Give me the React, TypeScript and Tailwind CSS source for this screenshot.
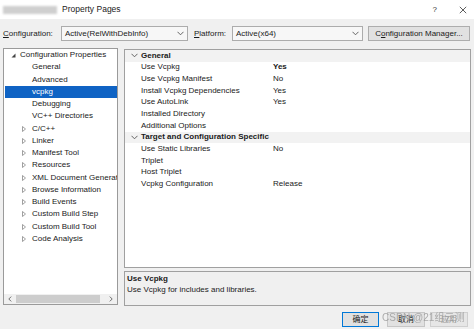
import React from "react";

const treeItems: { label: string; level: 0 | 1; expander?: "open" | "closed"; selected?: boolean }[] = [
  { label: "Configuration Properties", level: 0, expander: "open" },
  { label: "General", level: 1 },
  { label: "Advanced", level: 1 },
  { label: "vcpkg", level: 1, selected: true },
  { label: "Debugging", level: 1 },
  { label: "VC++ Directories", level: 1 },
  { label: "C/C++", level: 1, expander: "closed" },
  { label: "Linker", level: 1, expander: "closed" },
  { label: "Manifest Tool", level: 1, expander: "closed" },
  { label: "Resources", level: 1, expander: "closed" },
  { label: "XML Document Generator", level: 1, expander: "closed" },
  { label: "Browse Information", level: 1, expander: "closed" },
  { label: "Build Events", level: 1, expander: "closed" },
  { label: "Custom Build Step", level: 1, expander: "closed" },
  { label: "Custom Build Tool", level: 1, expander: "closed" },
  { label: "Code Analysis", level: 1, expander: "closed" },
];

type Row = { header?: boolean; name: string; value?: string; bold?: boolean };

const gridRows: Row[] = [
  { header: true, name: "General" },
  { name: "Use Vcpkg", value: "Yes", bold: true },
  { name: "Use Vcpkg Manifest", value: "No" },
  { name: "Install Vcpkg Dependencies", value: "Yes" },
  { name: "Use AutoLink", value: "Yes" },
  { name: "Installed Directory" },
  { name: "Additional Options" },
  { header: true, name: "Target and Configuration Specific" },
  { name: "Use Static Libraries", value: "No" },
  { name: "Triplet" },
  { name: "Host Triplet" },
  { name: "Vcpkg Configuration", value: "Release" },
];

function Chevron({ className = "" }: { className?: string }) {
  return (
    <svg width="7" height="5" viewBox="0 0 7 5" className={className}>
      <polyline points="0.5,0.8 3.5,3.8 6.5,0.8" fill="none" stroke="#555" strokeWidth="0.9" />
    </svg>
  );
}

function Expander({ kind }: { kind: "open" | "closed" }) {
  if (kind === "open") {
    return (
      <svg width="5" height="5" viewBox="0 0 5 5">
        <polygon points="4.5,0.5 4.5,4.5 0.5,4.5" fill="#444" />
      </svg>
    );
  }
  return (
    <svg width="4" height="6" viewBox="0 0 4 6">
      <polygon points="0.5,0.5 3.5,3 0.5,5.5" fill="none" stroke="#888" strokeWidth="0.8" />
    </svg>
  );
}

export default function App() {
  return (
    <div
      className="w-[474px] h-[329px] bg-[#f0f0f0] flex flex-col text-[8px] leading-none text-[#1a1a1a] overflow-hidden relative"
      style={{ fontFamily: '"Liberation Sans", "Noto Sans CJK SC", sans-serif' }}
    >
      {/* Title bar */}
      <div className="h-[19px] bg-white flex items-center shrink-0">
        <div className="ml-[3px] w-[54px] h-[8px] bg-[#cfcfcf] blur-[1px]" />
        <span className="ml-[5px] text-[8.5px] text-[#222]">Property Pages</span>
        <span className="ml-auto mr-[22px] text-[8px] text-[#333]">?</span>
        <svg width="8" height="8" viewBox="0 0 8 8" className="mr-[7px]">
          <path d="M0.8 0.8 L7.2 7.2 M7.2 0.8 L0.8 7.2" stroke="#333" strokeWidth="0.8" />
        </svg>
      </div>

      {/* Toolbar */}
      <div className="flex items-center h-[15px] mt-[7px] pl-[3px] shrink-0">
        <span className="w-[58px]">
          <span className="underline">C</span>onfiguration:
        </span>
        <div className="w-[127px] h-[15px] border border-[#acacac] bg-[#f7f7f7] flex items-center pl-[3px] pr-[3px]">
          <span>Active(RelWithDebInfo)</span>
          <Chevron className="ml-auto" />
        </div>
        <span className="ml-[6px] w-[38px]">
          <span className="underline">P</span>latform:
        </span>
        <div className="w-[131px] h-[15px] border border-[#acacac] bg-[#f7f7f7] flex items-center pl-[3px] pr-[3px]">
          <span>Active(x64)</span>
          <Chevron className="ml-auto" />
        </div>
        <div className="ml-[5px] w-[102px] h-[15px] border border-[#adadad] bg-[#e1e1e1] flex items-center justify-center">
          C<span className="underline">o</span>nfiguration Manager...
        </div>
      </div>

      {/* Main */}
      <div className="flex mt-[7px] h-[257px] shrink-0">
        {/* Tree */}
        <div className="ml-[3px] w-[115px] h-[257px] border border-[#9a9a9a] bg-white flex flex-col">
          <div className="flex-1 flex flex-col overflow-hidden">
            {treeItems.map((it) => (
              <div
                key={it.label}
                className={`h-[12.25px] shrink-0 flex items-center ml-[1px] mr-[0px] whitespace-nowrap ${
                  it.selected ? "bg-[#0f63c4] text-white" : ""
                }`}
              >
                <div className={`${it.level === 0 ? "w-[15px] pl-[6px]" : "w-[27px] pl-[17px]"} flex items-center shrink-0`}>
                  {it.expander ? <Expander kind={it.expander} /> : null}
                </div>
                <span>{it.label}</span>
              </div>
            ))}
          </div>
          {/* Horizontal scrollbar */}
          <div className="h-[10px] mb-[0px] bg-[#f0f0f0] flex items-center px-[4px] shrink-0">
            <svg width="4" height="6" viewBox="0 0 4 6">
              <polyline points="3.2,0.6 0.8,3 3.2,5.4" fill="none" stroke="#606060" strokeWidth="0.9" />
            </svg>
            <div className="ml-[4px] w-[84px] h-[8px] bg-[#cdcdcd]" />
            <svg width="4" height="6" viewBox="0 0 4 6" className="ml-auto">
              <polyline points="0.8,0.6 3.2,3 0.8,5.4" fill="none" stroke="#606060" strokeWidth="0.9" />
            </svg>
          </div>
        </div>

        {/* Right column */}
        <div className="ml-[6px] w-[347px] flex flex-col">
          <div className="mt-[1px] h-[219px] border border-[#a0a0a0] bg-white flex flex-col shrink-0">
            {gridRows.map((r) =>
              r.header ? (
                <div key={r.name} className="h-[11.67px] shrink-0 flex items-center bg-[#f2f2f2] font-bold">
                  <div className="w-[16px] pl-[6px] flex items-center">
                    <Chevron />
                  </div>
                  <span>{r.name}</span>
                </div>
              ) : (
                <div key={r.name} className="h-[11.67px] shrink-0 flex items-center">
                  <span className="pl-[16px] w-[148px] shrink-0">{r.name}</span>
                  <span className={r.bold ? "font-bold" : ""}>{r.value ?? ""}</span>
                </div>
              )
            )}
          </div>
          <div className="mt-[3px] h-[35px] border border-[#a0a0a0] bg-[#f0f0f0] flex flex-col pl-[2px] pt-[3px] shrink-0">
            <span className="font-bold">Use Vcpkg</span>
            <span className="mt-[3px]">Use Vcpkg for includes and libraries.</span>
          </div>
        </div>
      </div>

      {/* Buttons */}
      <div className="flex mt-[7px] h-[15px] shrink-0 pl-[342px] relative">
        <div className="w-[37px] h-[15px] border border-[#0078d7] bg-[#e1e1e1] flex items-center justify-center">确定</div>
        <div className="ml-[8px] w-[38px] h-[15px] border border-[#c6c6c6] bg-[#e1e1e1] flex items-center justify-center">取消</div>
        <div className="ml-[5px] w-[38px] h-[15px] border border-[#cfcfcf] bg-[#e6e6e6] flex items-center justify-center text-[#9a9a9a]">应用</div>
        <span className="absolute left-[382px] top-[1px] text-[10px] text-[#9a9a9a] opacity-80 whitespace-nowrap">
          CSDN @21组云测
        </span>
      </div>
    </div>
  );
}
